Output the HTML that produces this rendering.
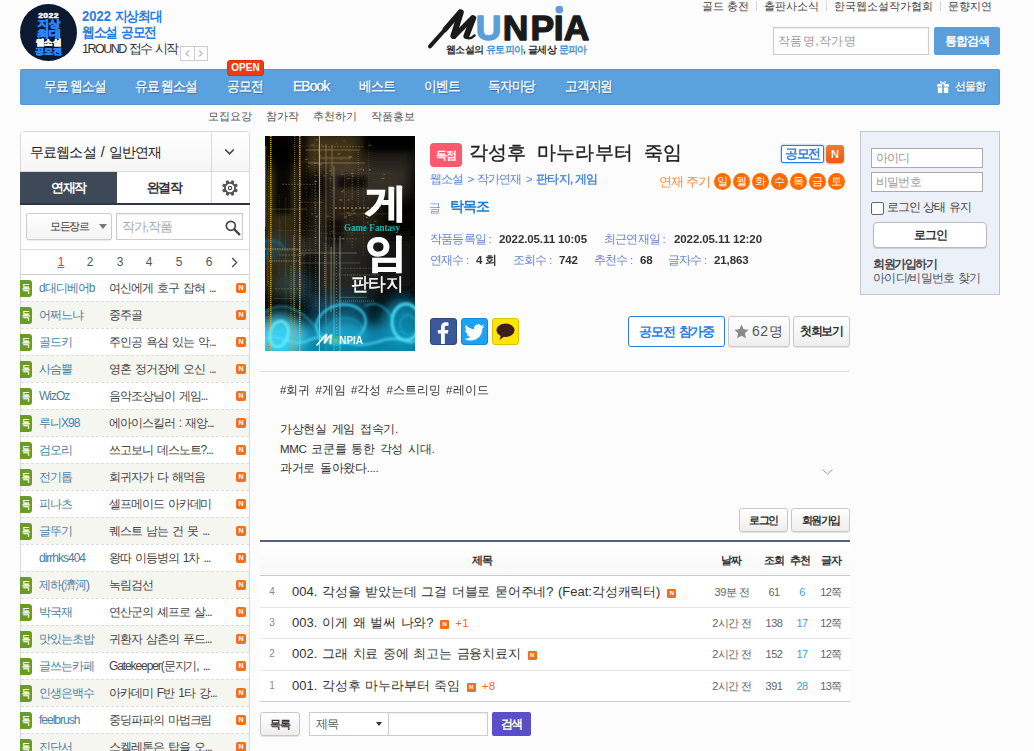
<!DOCTYPE html>
<html lang="ko">
<head>
<meta charset="utf-8">
<title>문피아</title>
<style>
*{box-sizing:border-box;margin:0;padding:0}
html,body{width:1034px;height:751px;overflow:hidden}
body{position:relative;background:#fcfcfd;font-family:"Liberation Sans",sans-serif;font-size:12px;color:#333}
.a{position:absolute;white-space:nowrap}
/* header */
.circ{left:20px;top:4px;width:57px;height:57px;border-radius:50%;background:#0b1a30;overflow:hidden}
.circ span{position:absolute;left:0;width:57px;text-align:center;font-weight:bold;color:#2a86ff;display:block;line-height:1}
.bt1{left:82px;top:9px;font-size:13px;line-height:13.600px;font-weight:bold;color:#2a7de1;letter-spacing:-1.300px;word-spacing:1.500px;transform:scaleY(1.1);transform-origin:0 0}
.bt1 u{text-decoration:none;letter-spacing:0}
.bt3{left:82px;top:42px;font-size:12.5px;line-height:15px;color:#333;letter-spacing:-1.5px;word-spacing:1px}
.arr{left:180px;top:46px;width:28px;height:15px;border:1px solid #ccc;background:#fff}
.arr i{position:absolute;left:13px;top:0;width:1px;height:13px;background:#ccc}
.tl{top:-1px;height:14px;line-height:14px;font-size:11px;color:#444}
.tsep{top:1px;width:1px;height:10px;background:#d5d5d5}
.sinp{left:773px;top:27px;width:156px;height:28px;border:1px solid #ccc;background:#fff;box-shadow:inset 0 1px 2px rgba(0,0,0,.08);font-size:12px;color:#999;line-height:26px;padding-left:4px;letter-spacing:.4px}
.sbtn{left:934px;top:27px;width:66px;height:28px;background:#5a9fdc;color:#fff;font-weight:bold;font-size:12px;line-height:28px;text-align:center;border-radius:2px;letter-spacing:-.8px}
.nav{left:20px;top:69px;width:980px;height:36px;background:#5ba1dd;border-radius:2px;box-shadow:inset 0 0 0 1px rgba(70,130,190,.35)}
.nv{top:69px;height:35px;line-height:35px;color:#fff;font-size:14px;text-shadow:1px 1px 1px rgba(40,80,130,.7);-webkit-text-stroke:.25px #fff;letter-spacing:-1px;transform:scaleX(.91);transform-origin:0 50%}
.open{left:227px;top:60px;width:37px;height:16px;background:#ee3b16;border:1px solid #d9300f;border-radius:3px;color:#fff;font-size:10px;font-weight:bold;line-height:14px;text-align:center}
.sub{top:108px;height:16px;line-height:16px;font-size:11px;color:#555}

/* sidebar */
.sb{left:20px;top:131px;width:230px;height:640px;border:1px solid #d9d9d9;border-radius:4px 4px 0 0;background:#fff}
.sbh{left:21px;top:132px;width:228px;height:40px;background:linear-gradient(#fff,#f6f6f6);border-bottom:1px solid #d9d9d9;border-radius:3px 3px 0 0}
.sbt{left:30px;top:132px;height:40px;line-height:41px;font-size:14px;color:#222;letter-spacing:-.85px;word-spacing:2px}
.vl{width:1px;background:#d9d9d9}
.tab1{left:20px;top:172px;width:97px;height:31px;background:#3d4957;color:#fff;font-weight:bold;font-size:13px;line-height:32px;text-align:center;letter-spacing:-1.500px}
.tab2{left:117px;top:172px;width:94px;height:31px;background:#fff;color:#333;font-weight:bold;font-size:13px;line-height:32px;text-align:center;letter-spacing:-1.500px}
.tabl{left:20px;top:203px;width:230px;height:2px;background:#2c3848}
.sel{left:26px;top:213px;width:86px;height:27px;border:1px solid #ccc;border-radius:2px;background:linear-gradient(#fff,#f4f4f4);box-shadow:0 1px 1px rgba(0,0,0,.08);font-size:11px;color:#333;line-height:25px;padding-left:23px;letter-spacing:-1.300px}
.sin{left:116px;top:213px;width:127px;height:27px;border:1px solid #ccc;background:#fff;box-shadow:inset 0 1px 2px rgba(0,0,0,.08);font-size:13px;color:#aaa;line-height:25px;padding-left:5px;letter-spacing:-1.2px}
.hl{height:1px;background:#ddd}
.pg{top:253px;height:18px;line-height:18px;font-size:12px;color:#555;width:20px;text-align:center}
.row{left:21px;width:228px;height:27px;border-top:1px dashed #ddd}
.row.sh{background:#f6f6f1}
.dk{left:20px;width:12px;height:17px;background:#6a9b24;border-radius:0 3px 3px 0;color:#fff;font-size:10.5px;line-height:17px;text-align:center;overflow:hidden}
.dk i{display:block;font-style:normal;font-weight:bold;transform:scaleX(.74);margin-left:-2px;width:16px;text-align:center}
.au{left:39px;height:27px;line-height:28px;font-size:12px;color:#4b7ea3;letter-spacing:-1px}
.ti{left:109px;height:27px;line-height:28px;font-size:12px;color:#444;letter-spacing:-1.1px;word-spacing:2px}
.nb{left:236px;width:10px;height:10px;background:#f2701a;border-radius:2px;color:#fff;font-size:7px;font-weight:bold;line-height:10px;text-align:center}

/* main */
.cov{left:265px;top:136px;width:150px;height:215px;background:#000;overflow:hidden}
.dj{left:430px;top:143px;width:32px;height:24px;background:#f95b6c;border-radius:4px;color:#fff;font-weight:bold;font-size:11px;line-height:24px;text-align:center;letter-spacing:-1.2px}
.ttl{left:469px;top:140px;height:26px;line-height:26px;font-size:19px;color:#222;letter-spacing:.2px;word-spacing:5px;font-weight:normal;-webkit-text-stroke:.35px #222}
.bc{left:430px;top:171px;height:16px;line-height:16px;font-size:11.5px;color:#5b86d6;letter-spacing:-1px}
.bc b{color:#3a7be0;font-weight:normal;letter-spacing:-.7px;-webkit-text-stroke:.3px #3a7be0}
.gl{left:429px;top:200px;height:16px;line-height:16px;font-size:12px;color:#6b93dc}
.wr{left:450px;top:198px;height:18px;line-height:18px;font-size:13.5px;font-weight:bold;color:#1f7bd0;letter-spacing:-1px}
.ml{height:16px;line-height:16px;font-size:11.5px;color:#6a82cc;letter-spacing:-.8px}
.mv{height:16px;line-height:16px;font-size:11.5px;color:#333;font-weight:bold;letter-spacing:-.1px}
.gm{left:781px;top:145px;width:43px;height:18px;border:1px solid #2a7de1;border-radius:2px;background:#fff;box-shadow:0 0 2px rgba(42,125,225,.8);color:#2a7de1;font-weight:bold;font-size:12.5px;line-height:16px;text-align:center;letter-spacing:-1.2px}
.nn{left:826px;top:145px;width:18px;height:18px;border-radius:3px;background:linear-gradient(#f57a26,#ec5a10);box-shadow:0 1px 2px rgba(0,0,0,.3);color:#fff;font-weight:bold;font-size:11px;line-height:18px;text-align:center}
.cy{left:659px;top:173px;height:18px;line-height:18px;font-size:12.5px;color:#ff8a3c;letter-spacing:-1px;word-spacing:1px}
.dc{top:173px;width:17px;height:17px;border-radius:50%;background:#ff6b00;color:#fff;font-size:11px;line-height:17px;text-align:center}
.shr{top:318px;width:27px;height:27px;border-radius:3px}
.b1{left:628px;top:316px;width:97px;height:31px;border:1px solid #2a7de1;border-radius:3px;background:#fff;color:#2a7de1;font-weight:bold;font-size:13px;line-height:29px;text-align:center;letter-spacing:-1.3px;word-spacing:2px}
.gb{border:1px solid #c8c8c8;border-radius:3px;background:linear-gradient(#fff,#eee);box-shadow:0 1px 1px rgba(0,0,0,.1);color:#333;font-weight:bold;text-align:center;letter-spacing:-1.2px}
.desc{left:280px;font-size:11.5px;color:#333;height:19px;line-height:19px;letter-spacing:-.3px;word-spacing:2px}
.tbl{left:260px;top:542px;width:590px;height:160px;background:#fff}
.th{top:551px;height:18px;line-height:18px;font-size:11px;font-weight:bold;color:#333;letter-spacing:-1px}
.rn{left:266px;width:12px;text-align:center;font-size:10px;color:#888;height:31px;line-height:32px}
.rt{left:292px;height:31px;line-height:32px;font-size:13px;color:#333;letter-spacing:-.2px;word-spacing:1.4px}
.rt u{text-decoration:none;letter-spacing:0}
.rd{height:31px;line-height:32px;font-size:11px;color:#666;text-align:center;letter-spacing:-.5px}
.sn{display:inline-block;width:9px;height:9px;background:#f2701a;border-radius:1px;color:#fff;font-size:6px;font-weight:bold;line-height:9px;text-align:center;vertical-align:1px;margin-left:7px;letter-spacing:0}
.pl{color:#f2701a;font-size:11.5px;letter-spacing:.3px;margin-left:6px}
/* login */
.lg{left:860px;top:131px;width:140px;height:164px;background:#ecf0f8;border:1px solid #c3c5c9}
.li{left:871px;width:112px;height:20px;border:1px solid #aaa;background:#fff;font-size:11.5px;color:#999;line-height:18px;padding-left:4px;letter-spacing:-.8px}
.ck{left:871px;top:202px;width:13px;height:13px;border:1px solid #666;border-radius:2px;background:#fff}
</style>
</head>
<body>
<!-- HEADER -->
<div class="a circ">
<span style="top:7.500px;font-size:7.500px;color:#fff;letter-spacing:.3px;-webkit-text-stroke:.5px #fff;transform:scale(1.15,1)">2022</span>
<span style="top:13.500px;font-size:11px;-webkit-text-stroke:1px #2a86ff;transform:scale(.98,.88)">지상</span>
<span style="top:23.500px;font-size:11px;-webkit-text-stroke:1px #2a86ff;transform:scale(1.08,.88)">최대</span>
<span style="top:34px;font-size:9px;color:#fff;-webkit-text-stroke:.8px #fff;transform:scale(.95,.9)">웹소설</span>
<span style="top:42.500px;font-size:9px;-webkit-text-stroke:.8px #2a86ff;transform:scale(1.02,.9)">공모전</span>
</div>
<div class="a bt1"><u>2022</u> 지상최대<br>웹소설 공모전</div>
<div class="a bt3">1ROUND 접수 시작</div>
<div class="a arr"><i></i>
<svg class="a" style="left:0;top:0" width="26" height="13" viewBox="0 0 26 13"><path d="M8 3.5 L5 6.5 L8 9.5 M18 3.5 L21 6.5 L18 9.5" fill="none" stroke="#888" stroke-width="1"/></svg>
</div>

<div class="a tl" style="left:702px">골드 충전</div><div class="a tsep" style="left:756px"></div>
<div class="a tl" style="left:764px">출판사소식</div><div class="a tsep" style="left:826px"></div>
<div class="a tl" style="left:834px">한국웹소설작가협회</div><div class="a tsep" style="left:940px"></div>
<div class="a tl" style="left:948px">문향지연</div>
<div class="a sinp">작품명,작가명</div>
<div class="a sbtn">통합검색</div>

<svg class="a" style="left:420px;top:0" width="180" height="60" viewBox="420 0 180 60">
<g fill="none" stroke="#1a1a1a" stroke-linecap="round" stroke-linejoin="round">
<path d="M430 46.400 L446 28.500" stroke-width="4"/>
<path d="M445 29.500 L460 12.200" stroke-width="5"/>
<path d="M460.800 12.400 L453.400 36" stroke-width="6"/>
<path d="M454 36.400 L472.600 17.800" stroke-width="5"/>
<path d="M473.200 18.200 L466.400 36" stroke-width="6"/>
<path d="M466.500 37.600 C469 39.200 472 38 474.600 35.400" stroke-width="2.400"/>
</g>
<g font-family="Liberation Sans, sans-serif" font-weight="bold" font-size="35.500" fill="#1a1a1a" stroke="#1a1a1a" stroke-width="1.300" stroke-linejoin="round">
<text x="475.700" y="39.700" fill="#5b9fd8" stroke="#5b9fd8">U</text><text x="502.700" y="39.700">N</text><text x="530.400" y="39.700">P</text><text x="553.800" y="39.700">I</text><text x="563.700" y="39.700">A</text>
</g>
<circle cx="559.300" cy="9.600" r="3.900" fill="#5b9fd8"/>
</svg>
<div class="a" style="left:446px;top:43px;height:13px;line-height:13px;font-size:10px;font-weight:bold;color:#333;letter-spacing:-.75px;word-spacing:1px">웹소설의 <span style="color:#3f8fd4">유토피아</span>, 글세상 <span style="color:#3f8fd4">문피아</span></div>
<div class="a nav"></div>
<svg class="a" style="left:937px;top:81px" width="12" height="12" viewBox="0 0 12 12"><g fill="#fff"><rect x="0" y="3" width="5.200" height="2.600"/><rect x="6.800" y="3" width="5.200" height="2.600"/><rect x=".8" y="6.400" width="4.400" height="5.600"/><rect x="6.800" y="6.400" width="4.400" height="5.600"/><path d="M5.800 3 C3 3 2 .3 4 .2 C5.200 .2 5.800 1.600 6 2.600 C6.200 1.600 6.800 .2 8 .2 C10 .3 9 3 6.200 3z M4.200 1.200 C3.600 1.300 4 2.300 5.200 2.400 C5 1.700 4.700 1.200 4.200 1.200z M7.800 1.200 C7.300 1.200 7 1.700 6.800 2.400 C8 2.300 8.400 1.300 7.800 1.200z" fill-rule="evenodd"/></g></svg>
<div class="a nv" style="left:44px">무료 웹소설</div>
<div class="a nv" style="left:135px">유료 웹소설</div>
<div class="a nv" style="left:227px">공모전</div>
<div class="a nv" style="left:293px;transform:none;letter-spacing:-1px">EBook</div>
<div class="a nv" style="left:359px">베스트</div>
<div class="a nv" style="left:424px">이벤트</div>
<div class="a nv" style="left:488px">독자마당</div>
<div class="a nv" style="left:565px">고객지원</div>
<div class="a nv" style="left:955px;font-size:11px;letter-spacing:-1px;transform:none">선물함</div>
<div class="a open">OPEN</div>
<div class="a sub" style="left:208px">모집요강</div>
<div class="a sub" style="left:266px">참가작</div>
<div class="a sub" style="left:313px">추천하기</div>
<div class="a sub" style="left:371px">작품홍보</div>
<!-- SIDEBAR -->
<div class="a sb"></div>
<div class="a sbh"></div>
<div class="a sbt">무료웹소설 / 일반연재</div>
<div class="a vl" style="left:211px;top:132px;height:71px"></div>
<svg class="a" style="left:224px;top:148px" width="11" height="8" viewBox="0 0 11 8"><path d="M1.2 1.5 L5.5 5.8 L9.8 1.5" fill="none" stroke="#444" stroke-width="1.6"/></svg>
<div class="a tab1">연재작</div>
<div class="a tab2">완결작</div>
<svg class="a" style="left:222px;top:180px" width="16" height="16" viewBox="0 0 16 16"><defs><path id="gt" d="M6.500 .700 Q6.500 0 7.200 0 H8.800 Q9.500 0 9.500 .700 L10 3.200 H6z"/></defs><g fill="#555"><use href="#gt" transform="rotate(22.5 8 8)"/><use href="#gt" transform="rotate(67.5 8 8)"/><use href="#gt" transform="rotate(112.5 8 8)"/><use href="#gt" transform="rotate(157.5 8 8)"/><use href="#gt" transform="rotate(202.5 8 8)"/><use href="#gt" transform="rotate(247.5 8 8)"/><use href="#gt" transform="rotate(292.5 8 8)"/><use href="#gt" transform="rotate(337.5 8 8)"/></g><circle cx="8" cy="8" r="5" fill="none" stroke="#555" stroke-width="1.700"/><circle cx="8" cy="8" r="1.700" fill="none" stroke="#555" stroke-width="1.200"/></svg>
<div class="a tabl"></div>
<div class="a sel">모든장르</div>
<svg class="a" style="left:99px;top:224px" width="8" height="5" viewBox="0 0 8 5"><path d="M0 0h8L4 5z" fill="#777"/></svg>
<div class="a sin">작가,작품</div>
<svg class="a" style="left:224px;top:219px" width="17" height="17" viewBox="0 0 17 17"><circle cx="6.800" cy="6.800" r="4.500" fill="none" stroke="#444" stroke-width="1.700"/><path d="M10.4 10.4 L15.3 15.3" stroke="#444" stroke-width="2.4" stroke-linecap="round"/></svg>
<div class="a hl" style="left:21px;top:249px;width:228px"></div>
<div class="a pg" style="left:51px;color:#e8344e;text-decoration:underline">1</div>
<div class="a pg" style="left:80px;">2</div>
<div class="a pg" style="left:110px;">3</div>
<div class="a pg" style="left:139px;">4</div>
<div class="a pg" style="left:169px;">5</div>
<div class="a pg" style="left:199px;">6</div>
<svg class="a" style="left:231px;top:257px" width="7" height="11" viewBox="0 0 7 11"><path d="M1.2 1 L5.6 5.5 L1.2 10" fill="none" stroke="#555" stroke-width="1.4"/></svg>
<div class="a row" style="top:274px;border-top:1px solid #ccc"></div>
<div class="a dk" style="top:280px"><i>독</i></div>
<div class="a au" style="top:274px">d대디베어b</div>
<div class="a ti" style="top:274px">여신에게 호구 잡혀 ...</div>
<div class="a nb" style="top:283px">N</div>
<div class="a row sh" style="top:301px"></div>
<div class="a dk" style="top:307px"><i>독</i></div>
<div class="a au" style="top:301px">어쩌느냐</div>
<div class="a ti" style="top:301px">중주골</div>
<div class="a nb" style="top:310px">N</div>
<div class="a row" style="top:328px"></div>
<div class="a dk" style="top:334px"><i>독</i></div>
<div class="a au" style="top:328px">골드키</div>
<div class="a ti" style="top:328px">주인공 욕심 있는 악...</div>
<div class="a nb" style="top:337px">N</div>
<div class="a row sh" style="top:355px"></div>
<div class="a dk" style="top:361px"><i>독</i></div>
<div class="a au" style="top:355px">사슴뿔</div>
<div class="a ti" style="top:355px">영혼 정거장에 오신 ...</div>
<div class="a nb" style="top:364px">N</div>
<div class="a row" style="top:382px"></div>
<div class="a dk" style="top:388px"><i>독</i></div>
<div class="a au" style="top:382px">WizOz</div>
<div class="a ti" style="top:382px">음악조상님이 게임...</div>
<div class="a nb" style="top:391px">N</div>
<div class="a row sh" style="top:409px"></div>
<div class="a dk" style="top:415px"><i>독</i></div>
<div class="a au" style="top:409px">루니X98</div>
<div class="a ti" style="top:409px">에아이스킬러 : 재앙...</div>
<div class="a nb" style="top:418px">N</div>
<div class="a row" style="top:436px"></div>
<div class="a dk" style="top:442px"><i>독</i></div>
<div class="a au" style="top:436px">검오리</div>
<div class="a ti" style="top:436px">쓰고보니 데스노트?...</div>
<div class="a nb" style="top:445px">N</div>
<div class="a row sh" style="top:463px"></div>
<div class="a dk" style="top:469px"><i>독</i></div>
<div class="a au" style="top:463px">전기톱</div>
<div class="a ti" style="top:463px">회귀자가 다 해먹음</div>
<div class="a nb" style="top:472px">N</div>
<div class="a row" style="top:490px"></div>
<div class="a dk" style="top:496px"><i>독</i></div>
<div class="a au" style="top:490px">피나츠</div>
<div class="a ti" style="top:490px">셀프메이드 아카데미</div>
<div class="a nb" style="top:499px">N</div>
<div class="a row sh" style="top:517px"></div>
<div class="a dk" style="top:523px"><i>독</i></div>
<div class="a au" style="top:517px">글뚜기</div>
<div class="a ti" style="top:517px">퀘스트 남는 건 못 ...</div>
<div class="a nb" style="top:526px">N</div>
<div class="a row" style="top:544px"></div>
<div class="a au" style="top:544px">dirrhks404</div>
<div class="a ti" style="top:544px">왕따 이등병의 1차 ...</div>
<div class="a nb" style="top:553px">N</div>
<div class="a row sh" style="top:571px"></div>
<div class="a dk" style="top:577px"><i>독</i></div>
<div class="a au" style="top:571px">제하(濟河)</div>
<div class="a ti" style="top:571px">녹림검선</div>
<div class="a nb" style="top:580px">N</div>
<div class="a row" style="top:598px"></div>
<div class="a dk" style="top:604px"><i>독</i></div>
<div class="a au" style="top:598px">박국재</div>
<div class="a ti" style="top:598px">연산군의 셰프로 살...</div>
<div class="a nb" style="top:607px">N</div>
<div class="a row sh" style="top:625px"></div>
<div class="a dk" style="top:631px"><i>독</i></div>
<div class="a au" style="top:625px">맛있는초밥</div>
<div class="a ti" style="top:625px">귀환자 삼촌의 푸드...</div>
<div class="a nb" style="top:634px">N</div>
<div class="a row" style="top:652px"></div>
<div class="a dk" style="top:658px"><i>독</i></div>
<div class="a au" style="top:652px">글쓰는카페</div>
<div class="a ti" style="top:652px">Gatekeeper(문지기, ...</div>
<div class="a nb" style="top:661px">N</div>
<div class="a row sh" style="top:679px"></div>
<div class="a dk" style="top:685px"><i>독</i></div>
<div class="a au" style="top:679px">인생은백수</div>
<div class="a ti" style="top:679px">아카데미 F반 1타 강...</div>
<div class="a nb" style="top:688px">N</div>
<div class="a row" style="top:706px"></div>
<div class="a dk" style="top:712px"><i>독</i></div>
<div class="a au" style="top:706px">feelbrush</div>
<div class="a ti" style="top:706px">중딩파파의 마법크림</div>
<div class="a nb" style="top:715px">N</div>
<div class="a row sh" style="top:733px"></div>
<div class="a dk" style="top:739px"><i>독</i></div>
<div class="a au" style="top:733px">진단서</div>
<div class="a ti" style="top:733px">스켈레톤은 탑을 오...</div>
<div class="a nb" style="top:742px">N</div>
<!-- MAIN -->
<div class="a cov"><svg width="150" height="215" viewBox="0 0 150 215" style="position:absolute;left:0;top:0"><defs><filter id="b1" x="-20%" y="-20%" width="140%" height="140%"><feGaussianBlur stdDeviation="1"/></filter><filter id="b2" x="-30%" y="-30%" width="160%" height="160%"><feGaussianBlur stdDeviation="2.200"/></filter><filter id="b6" x="-40%" y="-40%" width="180%" height="180%"><feGaussianBlur stdDeviation="7"/></filter><filter id="b05" x="-50%" y="-5%" width="200%" height="110%"><feGaussianBlur stdDeviation=".45"/></filter></defs><rect width="150" height="215" fill="#050403"/><g filter="url(#b6)"><rect x="38" y="-4" width="58" height="40" fill="#6a5224" opacity=".6"/><rect x="62" y="28" width="82" height="34" fill="#554c3c" opacity=".62"/><rect x="-5" y="30" width="42" height="130" fill="#40341a" opacity=".75"/><rect x="45" y="62" width="70" height="45" fill="#4a3e28" opacity=".5"/><rect x="18" y="100" width="95" height="62" fill="#34342f" opacity=".7"/><rect x="100" y="16" width="50" height="22" fill="#2a2823" opacity=".8"/><rect x="96" y="100" width="54" height="55" fill="#1c1c1a" opacity=".8"/></g><g filter="url(#b2)" fill="#050403"><rect x="10" y="8" width="16" height="70" opacity=".8"/><rect x="37" y="0" width="5" height="100" opacity=".7"/><rect x="72" y="40" width="30" height="12" opacity=".7"/><rect x="60" y="84" width="18" height="24" opacity=".6"/><rect x="100" y="0" width="50" height="14" opacity=".9"/><rect x="38" y="118" width="16" height="40" opacity=".55"/></g><g filter="url(#b6)"><ellipse cx="70" cy="212" rx="95" ry="26" fill="#0a86b0" opacity=".95"/><ellipse cx="14" cy="200" rx="26" ry="22" fill="#3ad4f4" opacity=".95"/><ellipse cx="78" cy="196" rx="26" ry="14" fill="#1fb4dc" opacity=".7"/><ellipse cx="138" cy="186" rx="22" ry="24" fill="#109cc8" opacity=".8"/><ellipse cx="4" cy="112" rx="14" ry="12" fill="#1a6a90" opacity=".55"/><ellipse cx="75" cy="172" rx="34" ry="12" fill="#0c7aa6" opacity=".6"/><ellipse cx="30" cy="150" rx="22" ry="12" fill="#14506c" opacity=".5"/></g><path d="M50.7 67V171" stroke="#a88a48" stroke-width="0.9" opacity="0.45" stroke-dasharray="1 1"/><path d="M20.7 61V140" stroke="#b8933f" stroke-width="0.6" opacity="0.28"/><path d="M60.3 107V186" stroke="#8c7440" stroke-width="1.3" opacity="0.49" stroke-dasharray="1 1"/><path d="M69.8 100V130" stroke="#c9a24a" stroke-width="0.7" opacity="0.26"/><path d="M87.1 39V114" stroke="#b8933f" stroke-width="0.9" opacity="0.38" stroke-dasharray="1 2"/><path d="M0.5 10V91" stroke="#a88a48" stroke-width="1.3" opacity="0.5"/><path d="M79.3 38V83" stroke="#d8b868" stroke-width="0.5" opacity="0.36"/><path d="M44.8 102V160" stroke="#c9a24a" stroke-width="1.2" opacity="0.18" stroke-dasharray="1 1"/><path d="M103.8 6V63" stroke="#e0cc98" stroke-width="0.8" opacity="0.2" stroke-dasharray="1 1"/><path d="M87.2 32V64" stroke="#d8b868" stroke-width="0.5" opacity="0.31"/><path d="M15.1 85V111" stroke="#a88a48" stroke-width="1.1" opacity="0.24" stroke-dasharray="1 1"/><path d="M50.1 23V110" stroke="#b8933f" stroke-width="0.8" opacity="0.3" stroke-dasharray="1 2"/><path d="M47.1 26V74" stroke="#8c7440" stroke-width="0.7" opacity="0.46" stroke-dasharray="1 1"/><path d="M21.0 120V196" stroke="#8c7440" stroke-width="0.6" opacity="0.5" stroke-dasharray="1 1"/><path d="M49.5 1V78" stroke="#d8b868" stroke-width="0.8" opacity="0.2" stroke-dasharray="1 1"/><path d="M65.3 29V105" stroke="#d8b868" stroke-width="1.0" opacity="0.22" stroke-dasharray="1 2"/><path d="M93.2 16V74" stroke="#e0cc98" stroke-width="0.6" opacity="0.47" stroke-dasharray="1 1"/><path d="M81.2 19V97" stroke="#8c7440" stroke-width="0.7" opacity="0.48" stroke-dasharray="1 2"/><path d="M67.6 51V85" stroke="#c9a24a" stroke-width="0.9" opacity="0.26" stroke-dasharray="1 2"/><path d="M28.8 99V175" stroke="#d8b868" stroke-width="0.9" opacity="0.48"/><path d="M14.2 58V139" stroke="#8c7440" stroke-width="1.0" opacity="0.27" stroke-dasharray="1 1"/><path d="M83.9 8V68" stroke="#b8933f" stroke-width="0.5" opacity="0.24" stroke-dasharray="2 1"/><path d="M59.5 117V150" stroke="#b8933f" stroke-width="1.2" opacity="0.49" stroke-dasharray="1 1"/><path d="M66.1 111V176" stroke="#d8b868" stroke-width="1.1" opacity="0.49"/><path d="M67.0 9V40" stroke="#d8b868" stroke-width="0.8" opacity="0.5"/><path d="M50.7 44V73" stroke="#e0cc98" stroke-width="1.1" opacity="0.22" stroke-dasharray="2 1"/><path d="M39.4 82V184" stroke="#a88a48" stroke-width="1.3" opacity="0.19" stroke-dasharray="1 2"/><path d="M64.2 75V132" stroke="#8c7440" stroke-width="0.5" opacity="0.2"/><path d="M71.6 119V219" stroke="#e0cc98" stroke-width="0.8" opacity="0.48" stroke-dasharray="1 2"/><path d="M49.3 101V133" stroke="#8c7440" stroke-width="0.5" opacity="0.37" stroke-dasharray="1 2"/><path d="M2.5 115V150" stroke="#8c7440" stroke-width="1.0" opacity="0.34"/><path d="M41.2 17V94" stroke="#8c7440" stroke-width="0.6" opacity="0.47" stroke-dasharray="1 2"/><path d="M55.8 29V88" stroke="#d8b868" stroke-width="0.7" opacity="0.32" stroke-dasharray="1 1"/><path d="M98.6 46V121" stroke="#d8b868" stroke-width="0.7" opacity="0.22" stroke-dasharray="2 1"/><path d="M68 138.8H115" stroke="#d8b868" stroke-width="1.0" opacity="0.21" stroke-dasharray="1 1"/><path d="M17 48.3H51" stroke="#e0cc98" stroke-width="0.8" opacity="0.36" stroke-dasharray="2 1"/><path d="M79 139.1H114" stroke="#c9a24a" stroke-width="1.0" opacity="0.26" stroke-dasharray="2 1"/><path d="M57 10.7H98" stroke="#d8b868" stroke-width="0.9" opacity="0.33" stroke-dasharray="2 1"/><path d="M36 25.9H52" stroke="#d8b868" stroke-width="0.6" opacity="0.22"/><path d="M9 162.4H29" stroke="#8c7440" stroke-width="0.9" opacity="0.4"/><path d="M16 114.2H52" stroke="#b8933f" stroke-width="0.9" opacity="0.38" stroke-dasharray="2 1"/><path d="M14 119.0H41" stroke="#d8b868" stroke-width="0.8" opacity="0.44" stroke-dasharray="2 1"/><path d="M60 102.9H93" stroke="#e0cc98" stroke-width="1.0" opacity="0.2" stroke-dasharray="2 1"/><path d="M36 66.5H60" stroke="#c9a24a" stroke-width="0.7" opacity="0.33" stroke-dasharray="2 1"/><path d="M76 132.3H112" stroke="#e0cc98" stroke-width="1.1" opacity="0.21" stroke-dasharray="2 1"/><path d="M10 152.8H36" stroke="#a88a48" stroke-width="1.1" opacity="0.44" stroke-dasharray="2 1"/><path d="M75 161.3H102" stroke="#e0cc98" stroke-width="1.0" opacity="0.27"/><path d="M27 10.0H61" stroke="#d8b868" stroke-width="0.8" opacity="0.19"/><path d="M3 73.1H42" stroke="#e0cc98" stroke-width="1.0" opacity="0.22"/><path d="M72 165.0H110" stroke="#e0cc98" stroke-width="0.9" opacity="0.44" stroke-dasharray="1 1"/><path d="M55 97.2H104" stroke="#a88a48" stroke-width="0.8" opacity="0.26" stroke-dasharray="2 1"/><path d="M13 94.4H51" stroke="#8c7440" stroke-width="0.7" opacity="0.36" stroke-dasharray="2 1"/><path d="M68 37.5H127" stroke="#8c7440" stroke-width="0.7" opacity="0.31" stroke-dasharray="1 1"/><path d="M40 90.3H82" stroke="#c9a24a" stroke-width="0.8" opacity="0.19" stroke-dasharray="1 1"/><path d="M79 91.6H99" stroke="#c9a24a" stroke-width="0.9" opacity="0.2" stroke-dasharray="2 1"/><path d="M74 77.9H125" stroke="#a88a48" stroke-width="0.7" opacity="0.31"/><path d="M5.8 0V215" stroke="#d8a63a" stroke-width="1.6" opacity="0.9" stroke-dasharray="1.2 .8"/><path d="M3.5 20V215" stroke="#8a6a28" stroke-width="1" opacity="0.55" stroke-dasharray="1 1.5"/><path d="M18 25V130" stroke="#6b6048" stroke-width="3" opacity="0.45" filter="url(#b1)"/><path d="M29.7 0V215" stroke="#b89a5a" stroke-width="1" opacity="0.7" stroke-dasharray="1 1"/><path d="M34.8 0V215" stroke="#e0b048" stroke-width="1.4" opacity="0.95" stroke-dasharray="1.5 .7"/><path d="M43 0V150" stroke="#b88a30" stroke-width="1.8" opacity="0.8" filter="url(#b05)"/><path d="M54.4 0V215" stroke="#e8dcc0" stroke-width="0.9" opacity="0.85"/><path d="M61 8V215" stroke="#a99a78" stroke-width="0.8" opacity="0.6"/><path d="M69 30V215" stroke="#d8d2c0" stroke-width="0.8" opacity="0.55"/><path d="M75 100V215" stroke="#cfe8f0" stroke-width="0.9" opacity="0.55"/><path d="M26 130V215" stroke="#c0a050" stroke-width="1" opacity="0.6" stroke-dasharray="1 1"/><path d="M40 14H95" stroke="#c8a860" stroke-width="0.8" opacity="0.55"/><path d="M43 27H100" stroke="#d0b878" stroke-width="0.8" opacity="0.5"/><path d="M55 22H85" stroke="#8a7444" stroke-width="2.5" opacity="0.4"/><path d="M70 72H112" stroke="#c8a040" stroke-width="2" opacity="0.55" stroke-dasharray="2 2"/><path d="M0 113H35" stroke="#d8b860" stroke-width="1" opacity="0.8" stroke-dasharray="1 .7"/><path d="M4 125H35" stroke="#c0a050" stroke-width="1" opacity="0.7" stroke-dasharray="1 .7"/><path d="M35 117H92" stroke="#b8a880" stroke-width="0.8" opacity="0.55"/><path d="M35 127H95" stroke="#9a9078" stroke-width="0.8" opacity="0.45"/><rect x="65.9" y="94.8" width="3.3" height="1.5" fill="#8c7440" opacity="0.33"/><rect x="53.7" y="65.6" width="3.3" height="0.7" fill="#c9a24a" opacity="0.21"/><rect x="50.8" y="3.2" width="1.6" height="1.3" fill="#b8933f" opacity="0.45"/><rect x="46.6" y="77.3" width="1.1" height="1.1" fill="#d8b868" opacity="0.49"/><rect x="95.5" y="92.5" width="0.9" height="1.2" fill="#8c7440" opacity="0.45"/><rect x="82.1" y="91.0" width="2.2" height="0.8" fill="#b8933f" opacity="0.54"/><rect x="88.2" y="90.2" width="1.4" height="1.3" fill="#d8b868" opacity="0.56"/><rect x="63.9" y="34.4" width="3.3" height="0.8" fill="#b8933f" opacity="0.56"/><rect x="49.0" y="26.7" width="2.8" height="0.9" fill="#c9a24a" opacity="0.37"/><rect x="115.2" y="58.0" width="2.7" height="0.8" fill="#e0cc98" opacity="0.47"/><rect x="39.5" y="22.7" width="2.6" height="1.5" fill="#d8b868" opacity="0.25"/><rect x="79.5" y="80.1" width="2.2" height="1.3" fill="#b8933f" opacity="0.52"/><rect x="77.5" y="4.5" width="2.9" height="1.2" fill="#8c7440" opacity="0.39"/><rect x="53.5" y="13.8" width="1.3" height="0.8" fill="#d8b868" opacity="0.57"/><rect x="45.8" y="8.4" width="3.4" height="1.1" fill="#c9a24a" opacity="0.33"/><rect x="76.3" y="55.1" width="2.0" height="1.2" fill="#c9a24a" opacity="0.45"/><rect x="41.4" y="22.6" width="1.9" height="1.0" fill="#d8b868" opacity="0.36"/><rect x="54.0" y="19.0" width="2.2" height="0.6" fill="#c9a24a" opacity="0.52"/><rect x="95.8" y="90.7" width="2.5" height="1.0" fill="#8c7440" opacity="0.28"/><rect x="85.9" y="37.1" width="2.9" height="0.9" fill="#c9a24a" opacity="0.50"/><rect x="101.8" y="85.9" width="1.9" height="1.5" fill="#8c7440" opacity="0.48"/><rect x="100.9" y="80.8" width="1.9" height="1.3" fill="#c9a24a" opacity="0.52"/><rect x="62.7" y="12.4" width="3.2" height="1.6" fill="#8c7440" opacity="0.22"/><rect x="60.4" y="101.0" width="1.6" height="0.8" fill="#a88a48" opacity="0.43"/><rect x="81.7" y="42.1" width="3.5" height="1.2" fill="#e0cc98" opacity="0.25"/><rect x="70.4" y="61.2" width="1.1" height="0.7" fill="#b8933f" opacity="0.30"/><rect x="70.9" y="7.2" width="1.3" height="1.0" fill="#c9a24a" opacity="0.30"/><rect x="60.6" y="37.1" width="2.3" height="1.0" fill="#8c7440" opacity="0.43"/><rect x="119.6" y="67.7" width="3.0" height="0.7" fill="#8c7440" opacity="0.47"/><rect x="116.3" y="41.8" width="3.3" height="1.0" fill="#b8933f" opacity="0.54"/><rect x="82.4" y="63.4" width="2.0" height="1.1" fill="#d8b868" opacity="0.41"/><rect x="87.0" y="39.7" width="1.6" height="1.3" fill="#8c7440" opacity="0.57"/><rect x="92.4" y="79.0" width="0.9" height="1.4" fill="#8c7440" opacity="0.22"/><rect x="50.8" y="79.7" width="1.9" height="1.5" fill="#e0cc98" opacity="0.36"/><rect x="85.7" y="76.5" width="1.7" height="1.4" fill="#b8933f" opacity="0.37"/><rect x="77.2" y="102.2" width="1.5" height="1.1" fill="#e0cc98" opacity="0.56"/><rect x="49.8" y="100.9" width="1.5" height="1.3" fill="#c9a24a" opacity="0.45"/><rect x="75.4" y="23.0" width="0.9" height="1.1" fill="#c9a24a" opacity="0.35"/><rect x="49.5" y="44.9" width="2.4" height="1.2" fill="#e0cc98" opacity="0.37"/><rect x="101.8" y="56.7" width="3.5" height="1.6" fill="#e0cc98" opacity="0.25"/><rect x="77.5" y="53.8" width="1.6" height="1.1" fill="#d8b868" opacity="0.31"/><rect x="88.0" y="76.7" width="2.7" height="0.8" fill="#d8b868" opacity="0.50"/><rect x="53.6" y="27.6" width="3.4" height="1.5" fill="#e0cc98" opacity="0.22"/><rect x="43.0" y="29.9" width="1.9" height="1.2" fill="#c9a24a" opacity="0.29"/><rect x="60.8" y="79.8" width="3.3" height="0.8" fill="#b8933f" opacity="0.45"/><rect x="68.6" y="51.3" width="1.4" height="0.9" fill="#e0cc98" opacity="0.25"/><rect x="109.3" y="84.6" width="2.0" height="1.4" fill="#b8933f" opacity="0.38"/><rect x="99.3" y="42.2" width="1.2" height="0.8" fill="#8c7440" opacity="0.33"/><rect x="83.0" y="78.8" width="3.3" height="1.0" fill="#d8b868" opacity="0.43"/><rect x="75.9" y="35.4" width="2.3" height="1.0" fill="#8c7440" opacity="0.39"/><rect x="94.2" y="32.8" width="2.9" height="0.7" fill="#b8933f" opacity="0.56"/><rect x="87.5" y="73.6" width="2.1" height="1.4" fill="#d8b868" opacity="0.31"/><rect x="49.7" y="38.9" width="2.8" height="1.0" fill="#c9a24a" opacity="0.33"/><rect x="74.2" y="63.3" width="3.2" height="1.3" fill="#d8b868" opacity="0.38"/><rect x="103.9" y="33.4" width="1.7" height="1.0" fill="#e0cc98" opacity="0.56"/><rect x="58.4" y="39.3" width="1.8" height="1.0" fill="#a88a48" opacity="0.43"/><rect x="103.3" y="78.1" width="1.8" height="1.0" fill="#b8933f" opacity="0.53"/><rect x="84.1" y="20.2" width="2.8" height="1.5" fill="#d8b868" opacity="0.52"/><rect x="56.1" y="7.9" width="1.2" height="0.9" fill="#c9a24a" opacity="0.46"/><rect x="104.0" y="8.6" width="2.3" height="1.4" fill="#c9a24a" opacity="0.33"/><rect x="60.4" y="12.9" width="1.6" height="0.6" fill="#e0cc98" opacity="0.26"/><rect x="99.2" y="68.8" width="1.5" height="0.8" fill="#8c7440" opacity="0.34"/><rect x="75.6" y="38.1" width="3.0" height="0.9" fill="#b8933f" opacity="0.40"/><rect x="82.1" y="76.3" width="2.7" height="1.5" fill="#a88a48" opacity="0.50"/><rect x="118.8" y="38.0" width="0.8" height="1.0" fill="#c9a24a" opacity="0.56"/><rect x="116.5" y="67.9" width="2.2" height="1.3" fill="#c9a24a" opacity="0.37"/><rect x="72.5" y="17.1" width="2.8" height="1.6" fill="#a88a48" opacity="0.47"/><rect x="64.3" y="42.1" width="2.2" height="0.9" fill="#c9a24a" opacity="0.39"/><rect x="97.9" y="33.3" width="1.2" height="1.5" fill="#c9a24a" opacity="0.50"/><rect x="39.4" y="51.6" width="3.0" height="0.9" fill="#b8933f" opacity="0.27"/><g fill="none" stroke-linecap="round" filter="url(#b1)"><ellipse cx="76" cy="188" rx="25" ry="19" stroke="#35d6f5" stroke-width="2.400" opacity=".85" transform="rotate(-14 76 188)"/><ellipse cx="80" cy="193" rx="17" ry="11" stroke="#1fb0da" stroke-width="1.400" opacity=".6"/><ellipse cx="141" cy="186" rx="14" ry="18" stroke="#4fe6ff" stroke-width="3" opacity=".9"/><ellipse cx="143" cy="189" rx="8" ry="10" stroke="#23b8e0" stroke-width="1.500" opacity=".6"/><path d="M0 176 C14 166 30 170 44 184 C52 192 56 200 70 206" stroke="#2ccdf0" stroke-width="1.600" opacity=".6"/><path d="M100 170 C112 164 124 172 128 186" stroke="#2ccdf0" stroke-width="1.600" opacity=".6"/><path d="M-2 206 C12 192 26 214 44 204 S84 216 112 206 S140 212 152 204" stroke="#56e0fb" stroke-width="2.200" opacity=".75"/><ellipse cx="14" cy="198" rx="9" ry="13" stroke="#6ff0ff" stroke-width="3" opacity=".8" transform="rotate(15 14 198)"/><path d="M0 106 C8 103 16 106 20 113" stroke="#2a90c0" stroke-width="1.600" opacity=".5"/></g><g font-family="Liberation Sans, sans-serif" fill="#fff" text-anchor="end"><text x="142" y="80" font-size="39" font-weight="bold" stroke="#fff" stroke-width="1.300" textLength="42" lengthAdjust="spacingAndGlyphs">게</text><text x="142" y="130" font-size="39" font-weight="bold" stroke="#fff" stroke-width="1.300" textLength="42" lengthAdjust="spacingAndGlyphs">임</text><text x="138.500" y="154" font-size="18" stroke="#fff" stroke-width=".4" textLength="53" lengthAdjust="spacingAndGlyphs">판타지</text></g><text x="79" y="94.500" font-family="Liberation Serif, serif" font-size="9.500" font-weight="bold" fill="#22b5ad" textLength="56" lengthAdjust="spacingAndGlyphs">Game Fantasy</text><g transform="translate(51,197)"><path d="M1 12 C5 8 8 3 10.500 1.500 C10 5 8.500 8 8.500 10 C11 6 13.500 3 15.500 2 C15 5 14 8 14.500 10.500" fill="none" stroke="#fff" stroke-width="1.700" stroke-linecap="round" stroke-linejoin="round"/><text x="16" y="11" font-family="Liberation Sans, sans-serif" font-size="10.500" font-weight="bold" fill="#fff" textLength="31" lengthAdjust="spacingAndGlyphs"><tspan fill="#5dbb2f">U</tspan>NPIA</text></g></svg></div>
<div class="a dj">독점</div>
<div class="a ttl">각성후 마누라부터 죽임</div>
<div class="a bc">웹소설 &nbsp;&gt;&nbsp; 작가연재 &nbsp;&gt;&nbsp; <b>판타지, 게임</b></div>
<div class="a gl">글</div><div class="a wr">탁목조</div>
<div class="a ml" style="left:430px;top:231px">작품등록일 :</div>
<div class="a mv" style="left:499px;top:231px">2022.05.11 10:05</div>
<div class="a ml" style="left:604px;top:231px">최근연재일 :</div>
<div class="a mv" style="left:674px;top:231px">2022.05.11 12:20</div>
<div class="a ml" style="left:430px;top:252px">연재수 :</div>
<div class="a mv" style="left:476px;top:252px">4 회</div>
<div class="a ml" style="left:513px;top:252px">조회수 :</div>
<div class="a mv" style="left:559px;top:252px">742</div>
<div class="a ml" style="left:594px;top:252px">추천수 :</div>
<div class="a mv" style="left:640px;top:252px">68</div>
<div class="a ml" style="left:668px;top:252px">글자수 :</div>
<div class="a mv" style="left:714px;top:252px">21,863</div>
<div class="a gm">공모전</div><div class="a nn">N</div>
<div class="a cy">연재 주기</div>
<div class="a dc" style="left:714px">일</div>
<div class="a dc" style="left:733px">월</div>
<div class="a dc" style="left:752px">화</div>
<div class="a dc" style="left:771px">수</div>
<div class="a dc" style="left:790px">목</div>
<div class="a dc" style="left:809px">금</div>
<div class="a dc" style="left:828px">토</div>
<div class="a shr" style="left:430px;background:#3b5998;border:1px solid #2f477a"><svg width="25" height="25" viewBox="0 0 25 25"><path d="M13.8 25V14.6h3.1l.5-3.7h-3.6V8.6c0-1.1.3-1.8 1.8-1.8h1.9V3.5c-.3 0-1.500-.2-2.800-.2-2.800 0-4.700 1.700-4.700 4.800v2.800H6.900v3.700H10V25z" fill="#fff"/></svg></div>
<div class="a shr" style="left:461px;background:#1da1f2;border:1px solid #1788cf"><svg width="25" height="25" viewBox="0 0 25 25"><path transform="translate(2.5,3.5) scale(.83)" d="M23.950 4.570a10 10 0 0 1-2.820.770 4.960 4.960 0 0 0 2.160-2.720c-.950.560-2 .960-3.130 1.190a4.920 4.920 0 0 0-8.380 4.480C7.690 8.100 4.070 6.130 1.640 3.160a4.820 4.820 0 0 0-.670 2.480c0 1.710.870 3.210 2.190 4.100a4.900 4.900 0 0 1-2.230-.620v.060a4.920 4.920 0 0 0 3.950 4.830 5 5 0 0 1-2.210.080 4.940 4.940 0 0 0 4.600 3.420A9.870 9.870 0 0 1 0 19.540a14 14 0 0 0 7.560 2.210c9.050 0 14-7.500 14-13.980 0-.210 0-.420-.020-.630A9.940 9.940 0 0 0 24 4.590z" fill="#fff"/></svg></div>
<div class="a shr" style="left:492px;background:#ffe500;border:1px solid #d9c200"><svg width="25" height="25" viewBox="0 0 25 25"><ellipse cx="12.5" cy="11.3" rx="9" ry="6.800" fill="#3c1e1e"/><path d="M8 16l-1.500 5 5.500-4z" fill="#3c1e1e"/></svg></div>
<div class="a b1">공모전 참가중</div>
<div class="a gb" style="left:728px;top:316px;width:62px;height:31px;line-height:29px;font-size:14px;font-weight:normal;color:#555;padding-left:17px;letter-spacing:.5px">62명</div>
<svg class="a" style="left:734px;top:324px" width="15" height="15" viewBox="0 0 15 15"><path d="M7.500 .6l2.100 4.600 5 .6-3.700 3.400 1 5-4.400-2.500-4.400 2.500 1-5L.4 5.800l5-.6z" fill="#8a8a8a"/></svg>
<div class="a gb" style="left:793px;top:316px;width:57px;height:31px;line-height:29px;font-size:12px">첫회보기</div>
<div class="a hl" style="left:260px;top:371px;width:590px"></div>
<div class="a desc" style="top:381px;letter-spacing:.05px;word-spacing:1.700px">#회귀 #게임 #각성 #스트리밍 #레이드</div>
<div class="a desc" style="top:420px">가상현실 게임 접속기.</div>
<div class="a desc" style="top:440px">MMC 코쿤를 통한 각성 시대.</div>
<div class="a desc" style="top:459px">과거로 돌아왔다....</div>
<svg class="a" style="left:822px;top:469px" width="11" height="6" viewBox="0 0 11 6"><path d="M.6 .6 L5.500 5 L10.4 .6" fill="none" stroke="#999" stroke-width="1"/></svg>
<div class="a gb" style="left:739px;top:508px;width:49px;height:24px;line-height:22px;font-size:11px;letter-spacing:-1.500px">로그인</div>
<div class="a gb" style="left:791px;top:508px;width:59px;height:24px;line-height:22px;font-size:11px;letter-spacing:-1.500px">회원가입</div>
<div class="a" style="left:260px;top:540px;width:590px;height:2px;background:#5a5c80"></div>
<div class="a tbl"></div>
<div class="a" style="left:260px;top:542px;width:590px;height:33px;background:linear-gradient(#fff,#f8f8f8)"></div>
<div class="a" style="left:260px;top:575px;width:590px;height:1px;background:#c8c8c8"></div>
<div class="a th" style="left:472px">제목</div>
<div class="a th" style="left:721px">날짜</div>
<div class="a th" style="left:764px">조회</div>
<div class="a th" style="left:790px">추천</div>
<div class="a th" style="left:821px">글자</div>
<div class="a rn" style="top:576px">4</div>
<div class="a rt" style="top:576px"><u>004.</u> 각성을 받았는데 그걸 더블로 묻어주네? <u>(Feat:</u>각성캐릭터<u>)</u><span class="sn">N</span></div>
<div class="a rd" style="left:702px;width:60px;top:576px">39분 전</div>
<div class="a rd" style="left:759px;width:30px;top:576px">61</div>
<div class="a rd" style="left:787px;width:30px;top:576px;color:#3a9fe0">6</div>
<div class="a rd" style="left:816px;width:30px;top:576px">12쪽</div>
<div class="a rn" style="top:607px">3</div>
<div class="a rt" style="top:607px"><u>003.</u> 이게 왜 벌써 나와?<span class="sn">N</span><span class="pl">+1</span></div>
<div class="a rd" style="left:702px;width:60px;top:607px">2시간 전</div>
<div class="a rd" style="left:759px;width:30px;top:607px">138</div>
<div class="a rd" style="left:787px;width:30px;top:607px;color:#3a9fe0">17</div>
<div class="a rd" style="left:816px;width:30px;top:607px">12쪽</div>
<div class="a rn" style="top:638px">2</div>
<div class="a rt" style="top:638px"><u>002.</u> 그래 치료 중에 최고는 금융치료지<span class="sn">N</span></div>
<div class="a rd" style="left:702px;width:60px;top:638px">2시간 전</div>
<div class="a rd" style="left:759px;width:30px;top:638px">152</div>
<div class="a rd" style="left:787px;width:30px;top:638px;color:#3a9fe0">17</div>
<div class="a rd" style="left:816px;width:30px;top:638px">12쪽</div>
<div class="a rn" style="top:670px">1</div>
<div class="a rt" style="top:670px"><u>001.</u> 각성후 마누라부터 죽임<span class="sn">N</span><span class="pl">+8</span></div>
<div class="a rd" style="left:702px;width:60px;top:670px">2시간 전</div>
<div class="a rd" style="left:759px;width:30px;top:670px">391</div>
<div class="a rd" style="left:787px;width:30px;top:670px;color:#3a9fe0">28</div>
<div class="a rd" style="left:816px;width:30px;top:670px">13쪽</div>
<div class="a" style="left:260px;top:607px;width:590px;height:1px;background:#e8e8e8"></div>
<div class="a" style="left:260px;top:638px;width:590px;height:1px;background:#e8e8e8"></div>
<div class="a" style="left:260px;top:670px;width:590px;height:1px;background:#e8e8e8"></div>
<div class="a" style="left:260px;top:701px;width:590px;height:1px;background:#ccc"></div>
<div class="a gb" style="left:260px;top:712px;width:40px;height:24px;line-height:22px;font-size:11px;letter-spacing:-1px">목록</div>
<div class="a" style="left:309px;top:712px;width:80px;height:24px;border:1px solid #ccc;background:#fff;font-size:12px;color:#555;line-height:22px;padding-left:6px;letter-spacing:-1px">제목</div>
<svg class="a" style="left:376px;top:722px" width="6" height="4" viewBox="0 0 6 4"><path d="M0 0h6L3 4z" fill="#333"/></svg>
<div class="a" style="left:388px;top:712px;width:100px;height:24px;border:1px solid #ccc;background:#fff;box-shadow:inset 0 1px 2px rgba(0,0,0,.08)"></div>
<div class="a" style="left:492px;top:712px;width:39px;height:24px;border-radius:2px;background:#5a4fc8;color:#fff;font-weight:bold;font-size:11.5px;line-height:24px;text-align:center;letter-spacing:-1.2px">검색</div>
<!-- LOGIN -->
<div class="a lg"></div>
<div class="a li" style="top:148px">아이디</div>
<div class="a li" style="top:172px">비밀번호</div>
<div class="a ck"></div>
<div class="a" style="left:887px;top:199px;height:16px;line-height:16px;font-size:11.5px;color:#444;letter-spacing:-1.05px;word-spacing:1.500px">로그인 상태 유지</div>
<div class="a" style="left:873px;top:222px;width:114px;height:26px;border:1px solid #bbb;border-radius:4px;background:#fff;box-shadow:0 1px 1px rgba(0,0,0,.15);color:#333;font-weight:bold;font-size:11.5px;line-height:24px;text-align:center;letter-spacing:-1px">로그인</div>
<div class="a" style="left:873px;top:256px;height:16px;line-height:16px;font-size:11.5px;font-weight:bold;color:#444;letter-spacing:-1.400px">회원가입하기</div>
<div class="a" style="left:873px;top:270px;height:16px;line-height:16px;font-size:11.5px;color:#555;letter-spacing:-.7px;word-spacing:1px">아이디/비밀번호 찾기</div>
</body>
</html>
